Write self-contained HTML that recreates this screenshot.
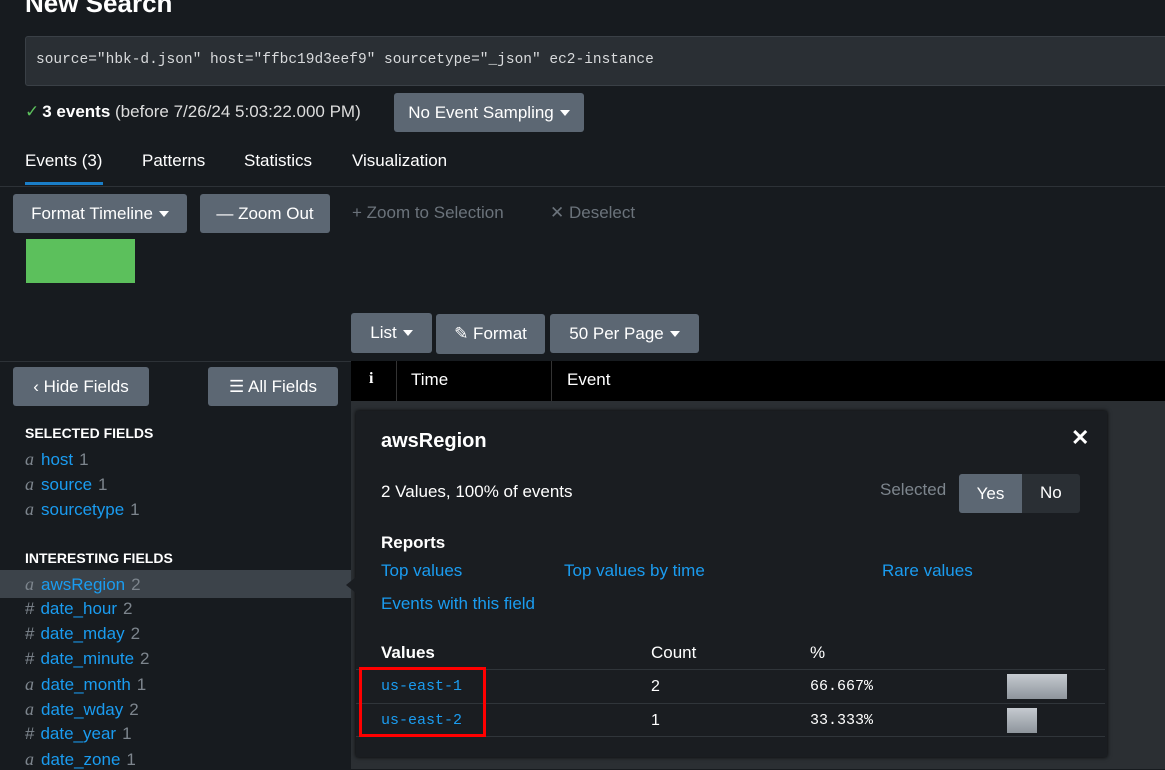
<!DOCTYPE html>
<html><head><meta charset="utf-8"><style>
*{box-sizing:border-box;margin:0;padding:0}
body{width:1165px;height:769px;overflow:hidden;background:#171b1f;font-family:"Liberation Sans",sans-serif;color:#fff;position:relative}
.a{position:absolute;white-space:nowrap}
.btn{position:absolute;background:#5c6773;border-radius:3px;color:#fff;font-size:17px;display:flex;align-items:center;justify-content:center}
.mono{font-family:"Liberation Mono",monospace}
.lk{color:#1a9cf0}
.f{position:absolute;left:25px;font-size:17px;color:#1a9cf0}
.f i{color:#7d858d;font-family:"Liberation Serif",serif;font-size:18px;margin-right:7px}
.f span{color:#7d858d;margin-left:6px}
.f b{color:#7d858d;font-weight:normal;margin-right:6px}
.car{display:inline-block;border-left:5px solid transparent;border-right:5px solid transparent;border-top:6px solid #fff;margin-left:6px;vertical-align:middle}
</style></head><body>
<div class="a" style="left:25px;top:-12px;font-size:26px;font-weight:bold">New Search</div>
<div class="a" style="left:25px;top:36px;width:1150px;height:50px;background:#2a2f34;border:1px solid #3a4046;border-radius:3px"></div>
<div class="a mono" style="left:36px;top:52px;font-size:14.5px;color:#d8dadc">source="hbk-d.json" host="ffbc19d3eef9" sourcetype="_json" ec2-instance</div>
<div class="a" style="left:25px;top:102px;font-size:17px;color:#ddd"><span style="color:#5cc05c;margin-right:3px">✓</span><b style="color:#fff">3 events</b> (before 7/26/24 5:03:22.000 PM)</div>
<div class="btn" style="left:394px;top:93px;width:190px;height:39px">No Event Sampling<span class="car"></span></div>
<div class="a" style="left:25px;top:151px;font-size:17px">Events (3)</div>
<div class="a" style="left:25px;top:182px;width:78px;height:3px;background:#1a7ec8"></div>
<div class="a" style="left:142px;top:151px;font-size:17px">Patterns</div>
<div class="a" style="left:244px;top:151px;font-size:17px">Statistics</div>
<div class="a" style="left:352px;top:151px;font-size:17px">Visualization</div>
<div class="a" style="left:0;top:186px;width:1165px;height:1px;background:#2d3237"></div>
<div class="btn" style="left:13px;top:194px;width:174px;height:39px">Format Timeline<span class="car"></span></div>
<div class="btn" style="left:200px;top:194px;width:130px;height:39px">— Zoom Out</div>
<div class="a" style="left:352px;top:203px;font-size:17px;color:#6b737b">+ Zoom to Selection</div>
<div class="a" style="left:550px;top:203px;font-size:17px;color:#6b737b">✕ Deselect</div>
<div class="a" style="left:26px;top:239px;width:109px;height:44px;background:#5cc05c"></div>
<div class="btn" style="left:351px;top:313px;width:81px;height:40px">List<span class="car"></span></div>
<div class="btn" style="left:436px;top:314px;width:109px;height:40px">✎ Format</div>
<div class="btn" style="left:550px;top:314px;width:149px;height:39px">50 Per Page<span class="car"></span></div>
<div class="a" style="left:0;top:361px;width:351px;height:1px;background:#2d3237"></div>
<div class="a" style="left:351px;top:361px;width:814px;height:40px;background:#000"></div>
<div class="a" style="left:396px;top:361px;width:1px;height:40px;background:#333"></div>
<div class="a" style="left:551px;top:361px;width:1px;height:40px;background:#333"></div>
<div class="a" style="left:369px;top:370px;font-size:16px;font-weight:bold;font-family:'Liberation Serif',serif">i</div>
<div class="a" style="left:411px;top:370px;font-size:17px">Time</div>
<div class="a" style="left:567px;top:370px;font-size:17px">Event</div>
<div class="a" style="left:351px;top:401px;width:814px;height:368px;background:#2b2f33"></div>
<div class="btn" style="left:13px;top:367px;width:136px;height:39px">‹ Hide Fields</div>
<div class="btn" style="left:208px;top:367px;width:130px;height:39px">☰ All Fields</div>
<div class="a" style="left:25px;top:425px;font-size:14px;font-weight:bold">SELECTED FIELDS</div>
<div class="f" style="top:449px"><i>a</i>host<span>1</span></div>
<div class="f" style="top:474px"><i>a</i>source<span>1</span></div>
<div class="f" style="top:499px"><i>a</i>sourcetype<span>1</span></div>
<div class="a" style="left:25px;top:550px;font-size:14px;font-weight:bold">INTERESTING FIELDS</div>
<div class="a" style="left:0;top:570px;width:351px;height:28px;background:#3c434a"></div>
<div class="f" style="top:574px"><i>a</i>awsRegion<span>2</span></div>
<div class="f" style="top:599px"><b>#</b>date_hour<span>2</span></div>
<div class="f" style="top:624px"><b>#</b>date_mday<span>2</span></div>
<div class="f" style="top:649px"><b>#</b>date_minute<span>2</span></div>
<div class="f" style="top:674px"><i>a</i>date_month<span>1</span></div>
<div class="f" style="top:699px"><i>a</i>date_wday<span>2</span></div>
<div class="f" style="top:724px"><b>#</b>date_year<span>1</span></div>
<div class="f" style="top:749px"><i>a</i>date_zone<span>1</span></div>
<div class="a" style="left:356px;top:411px;width:751px;height:346px;background:#1a1d21;box-shadow:0 0 4px #000"></div>
<div class="a" style="left:346px;top:577px;width:0;height:0;border-top:8px solid transparent;border-bottom:8px solid transparent;border-right:10px solid #1a1d21"></div>
<div class="a" style="left:381px;top:430px;font-size:20px;font-weight:bold">awsRegion</div>
<div class="a" style="left:1071px;top:425px;font-size:22px;font-weight:bold">✕</div>
<div class="a" style="left:381px;top:482px;font-size:17px">2 Values, 100% of events</div>
<div class="a" style="left:880px;top:480px;font-size:17px;color:#7d858d">Selected</div>
<div class="a" style="left:959px;top:474px;width:121px;height:39px;background:#2a2f34;border-radius:3px"></div>
<div class="btn" style="left:959px;top:474px;width:63px;height:39px;border-radius:3px 0 0 3px">Yes</div>
<div class="a" style="left:1040px;top:483px;font-size:17px">No</div>
<div class="a" style="left:381px;top:533px;font-size:17px;font-weight:bold">Reports</div>
<div class="a lk" style="left:381px;top:561px;font-size:17px">Top values</div>
<div class="a lk" style="left:564px;top:561px;font-size:17px">Top values by time</div>
<div class="a lk" style="left:882px;top:561px;font-size:17px">Rare values</div>
<div class="a lk" style="left:381px;top:594px;font-size:17px">Events with this field</div>
<div class="a" style="left:381px;top:643px;font-size:17px;font-weight:bold">Values</div>
<div class="a" style="left:651px;top:643px;font-size:17px">Count</div>
<div class="a" style="left:810px;top:643px;font-size:17px">%</div>
<div class="a" style="left:356px;top:669px;width:749px;height:1px;background:#30353a"></div>
<div class="a" style="left:356px;top:703px;width:749px;height:1px;background:#30353a"></div>
<div class="a" style="left:356px;top:736px;width:749px;height:1px;background:#30353a"></div>
<div class="a mono lk" style="left:381px;top:678px;font-size:15px">us-east-1</div>
<div class="a mono lk" style="left:381px;top:712px;font-size:15px">us-east-2</div>
<div class="a" style="left:651px;top:678px;font-size:16px">2</div>
<div class="a" style="left:651px;top:712px;font-size:16px">1</div>
<div class="a mono" style="left:810px;top:678px;font-size:15px">66.667%</div>
<div class="a mono" style="left:810px;top:712px;font-size:15px">33.333%</div>
<div class="a" style="left:1007px;top:674px;width:60px;height:25px;background:linear-gradient(#c5cad0,#8e959c)"></div>
<div class="a" style="left:1007px;top:708px;width:30px;height:25px;background:linear-gradient(#c5cad0,#8e959c)"></div>
<div class="a" style="left:359px;top:667px;width:127px;height:70px;border:3px solid #ff0000"></div>
</body></html>
